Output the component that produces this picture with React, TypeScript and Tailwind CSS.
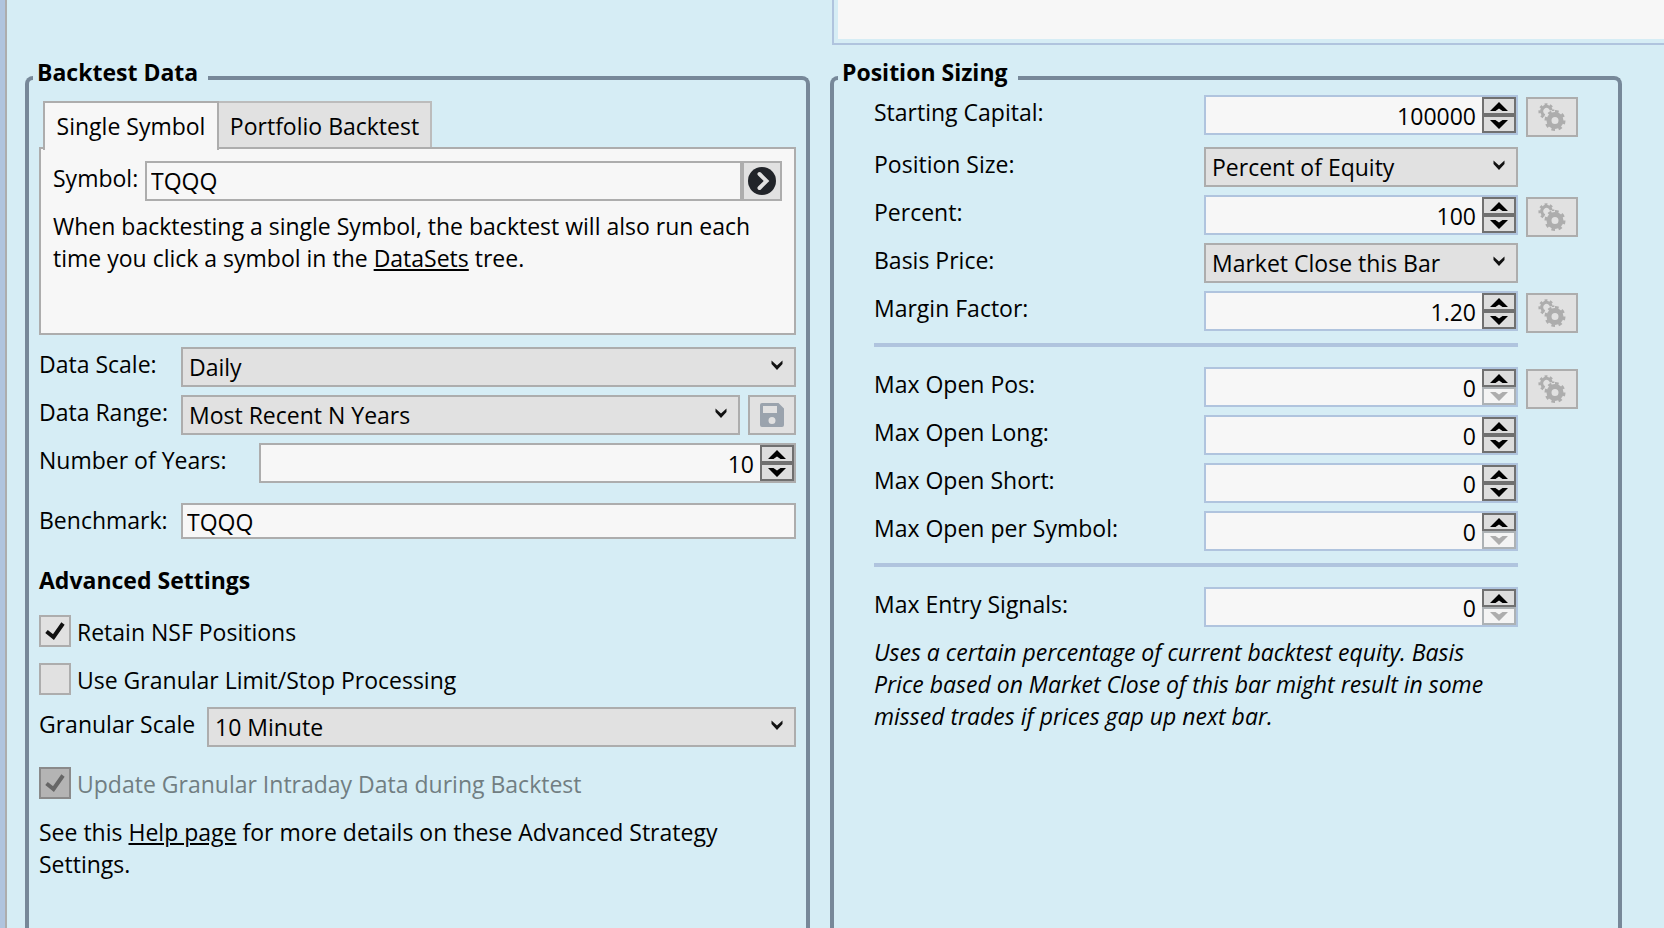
import { useId, useState } from 'react';
import type { ReactNode } from 'react';
import clsx from 'clsx';

const NOTE =
  'Uses a certain percentage of current backtest equity. Basis Price based on Market Close of this bar might result in some missed trades if prices gap up next bar.';

/* ── Icons ──────────────────────────────────────────────────────────────── */

function ChevronIcon() {
  return (
    <svg
      viewBox="0 0 12 10"
      className="pointer-events-none absolute right-[13px] top-[13px] h-2.5 w-3"
      aria-hidden
    >
      <path d="M0.5 0.5 L6 5.5 L11.5 0.5 V4 L6 10 L0.5 4 Z" fill="#111" />
    </svg>
  );
}

function SpinArrow({ down = false }: { down?: boolean }) {
  return (
    <svg viewBox="0 0 18 9" className={clsx('h-[9px] w-[18px]', down && 'rotate-180')} aria-hidden>
      <path d="M9 0 L18 9 H12.5 L9 6.5 L5.5 9 H0 Z" fill="currentColor" />
    </svg>
  );
}

function CheckIcon() {
  return (
    <svg
      viewBox="0 0 20 18"
      className="pointer-events-none absolute left-1.5 top-[7px] hidden h-[18px] w-5 peer-checked:block"
      aria-hidden
    >
      <path d="M1.5 9.5 L8.5 15 L18 1.5" fill="none" stroke="currentColor" strokeWidth="4" />
    </svg>
  );
}

function SaveIcon() {
  return (
    <svg viewBox="0 0 24 24" className="h-6 w-6" aria-hidden>
      <path
        fillRule="evenodd"
        fill="#9aa3ad"
        d="M2 0 H18.5 L24 5.5 V22 Q24 24 22 24 H2 Q0 24 0 22 V2 Q0 0 2 0 Z M3 3 V10 H17 V3 Z M12 14 A3.5 3.5 0 1 0 12 21 A3.5 3.5 0 1 0 12 14 Z"
      />
    </svg>
  );
}

function GoIcon() {
  return (
    <svg viewBox="0 0 28 28" className="h-7 w-7" aria-hidden>
      <circle cx="14" cy="14" r="14" fill="#212429" />
      <path
        d="M11.5 7 L18.5 14 L11.5 21"
        fill="none"
        stroke="#e1e1e1"
        strokeWidth="4"
        strokeLinecap="round"
      />
    </svg>
  );
}

function GearsIcon() {
  return (
    <svg viewBox="0 0 28 28" className="h-7 w-7" fill="none" stroke="#adadad" aria-hidden>
      {/* back gear, open on the side that the front one covers */}
      <path d="M6.6 12.6 A4.8 4.8 0 1 1 13.2 7.2" strokeWidth="3" />
      <path
        d="M5.2 14.2 A6.8 6.8 0 1 1 15.2 8"
        strokeWidth="2.4"
        strokeDasharray="2.7 2.6"
      />
      <circle cx="17" cy="17.5" r="6" strokeWidth="5" />
      <circle
        cx="17"
        cy="17.5"
        r="9.2"
        strokeWidth="2.6"
        strokeDasharray="3.6 3.6"
        pathLength="57.6"
      />
    </svg>
  );
}

/* ── Controls ───────────────────────────────────────────────────────────── */

function Select({ id, value }: { id: string; value: string }) {
  return (
    <div className="relative min-w-0 flex-1">
      <select
        id={id}
        defaultValue={value}
        className="block h-10 w-full appearance-none border-2 border-[#adadad] bg-[#e1e1e1] pb-px pl-1.5 pr-8"
      >
        <option value={value}>{value}</option>
      </select>
      <ChevronIcon />
    </div>
  );
}

interface SpinnerProps {
  id: string;
  value: string;
  atMin?: boolean;
  gray?: boolean;
}

function Spinner({ id, value, atMin = false, gray = false }: SpinnerProps) {
  const [text, setText] = useState(value);
  const decimals = value.includes('.') ? 2 : 0;
  const step = (by: number) => setText((Number(text) + by).toFixed(decimals));

  return (
    <div
      className={clsx(
        'flex h-10 min-w-0 flex-1 border-2 bg-[#f7f7f7]',
        gray ? 'border-[#adadad]' : 'border-[#b0c4de]',
      )}
    >
      <input
        id={id}
        type="text"
        inputMode="decimal"
        value={text}
        onChange={(e) => setText(e.target.value)}
        className="min-w-0 flex-1 pr-1.5 pt-0.5 text-right leading-8 outline-none"
      />
      <div className="flex w-[34px] flex-col">
        <button
          type="button"
          aria-label="Increase"
          onClick={() => step(1)}
          className="flex h-[18px] items-center justify-center border-2 border-[#707070] bg-[#dddddd]"
        >
          <SpinArrow />
        </button>
        <button
          type="button"
          aria-label="Decrease"
          disabled={atMin}
          onClick={() => step(-1)}
          className="flex h-[18px] items-center justify-center border-2 border-[#707070] bg-[#dddddd] disabled:border-[#adb2b5] disabled:bg-[#f4f4f4] disabled:text-[#adadad]"
        >
          <SpinArrow down />
        </button>
      </div>
    </div>
  );
}

interface CheckProps {
  label: string;
  checked?: boolean;
  disabled?: boolean;
}

function Check({ label, checked = false, disabled = false }: CheckProps) {
  return (
    <label
      className={clsx('flex h-8 items-start gap-1.5', disabled ? 'text-[#717e82]' : 'text-black')}
    >
      <span className={clsx('relative h-8 w-8 shrink-0', disabled ? 'text-[#666]' : 'text-[#111]')}>
        <input
          type="checkbox"
          defaultChecked={checked}
          disabled={disabled}
          className="peer block h-8 w-8 appearance-none border-2 border-[#adadad] bg-[#e1e1e1] disabled:border-[#8a8a8a] disabled:bg-[#b4b4b4]"
        />
        <CheckIcon />
      </span>
      <span className="pt-px">{label}</span>
    </label>
  );
}

function Group({ title, children }: { title: string; children: ReactNode }) {
  return (
    <fieldset className="min-w-0 rounded-t-lg border-4 border-b-0 border-[#778899] px-1">
      <legend className="pb-3 pl-1 pr-2.5 font-bold leading-5">{title}</legend>
      {children}
    </fieldset>
  );
}

/* ── Backtest Data ──────────────────────────────────────────────────────── */

function SymbolTabs() {
  const [tab, setTab] = useState('single');
  const tabClass = (name: string) =>
    clsx(
      'border-2 border-b-0',
      tab === name
        ? 'relative -mb-[3px] h-[49px] border-[#adadad] bg-[#f7f7f7] pb-px'
        : 'h-[46px] border-[#bcbcbc] bg-[#e1e1e1] pt-0.5',
    );

  return (
    <div>
      <div className="flex items-start px-1" role="tablist">
        <button
          type="button"
          role="tab"
          aria-selected={tab === 'single'}
          onClick={() => setTab('single')}
          className={clsx(tabClass('single'), 'w-44')}
        >
          Single Symbol
        </button>
        <button
          type="button"
          role="tab"
          aria-selected={tab === 'portfolio'}
          onClick={() => setTab('portfolio')}
          className={clsx(tabClass('portfolio'), 'w-[213px] border-l-0')}
        >
          Portfolio Backtest
        </button>
      </div>
      <div className="min-h-[188px] border-2 border-[#adadad] bg-[#f7f7f7] p-3">
        <div className="flex items-start">
          <label htmlFor="symbol" className="w-[92px] shrink-0 pt-px">
            Symbol:
          </label>
          <input
            id="symbol"
            type="text"
            defaultValue="TQQQ"
            className="h-10 min-w-0 flex-1 border-2 border-[#adadad] bg-[#f7f7f7] px-1 leading-8"
          />
          <button
            type="button"
            aria-label="Go"
            className="flex h-10 w-10 items-center justify-center border-2 border-[#adadad] bg-[#e1e1e1]"
          >
            <GoIcon />
          </button>
        </div>
        <p className="pt-[9px]">
          When backtesting a single Symbol, the backtest will also run each time you click a symbol
          in the{' '}
          <a href="#datasets" className="underline">
            DataSets
          </a>{' '}
          tree.
        </p>
      </div>
    </div>
  );
}

function BacktestData() {
  return (
    <Group title="Backtest Data">
      <div className="flex flex-col gap-2 px-1.5 pb-12 pt-[7px]">
        <SymbolTabs />
        <div className="flex items-start pt-1">
          <label htmlFor="scale" className="w-[142px] shrink-0 pt-px">
            Data Scale:
          </label>
          <Select id="scale" value="Daily" />
        </div>
        <div className="flex items-start">
          <label htmlFor="range" className="w-[142px] shrink-0 pt-px">
            Data Range:
          </label>
          <Select id="range" value="Most Recent N Years" />
          <button
            type="button"
            aria-label="Save range"
            disabled
            className="ml-2 flex h-10 w-12 items-center justify-center border-2 border-[#adadad] bg-[#e1e1e1]"
          >
            <SaveIcon />
          </button>
        </div>
        <div className="flex items-start">
          <label htmlFor="years" className="w-[220px] shrink-0 pt-px">
            Number of Years:
          </label>
          <Spinner id="years" value="10" gray />
        </div>
        <div className="flex items-start pt-3">
          <label htmlFor="benchmark" className="w-[142px] shrink-0 pt-px">
            Benchmark:
          </label>
          <input
            id="benchmark"
            type="text"
            defaultValue="TQQQ"
            className="h-9 min-w-0 flex-1 border-2 border-[#adadad] bg-[#f7f7f7] px-1 pt-0.5"
          />
        </div>
        <h2 className="pt-[17px] font-bold">Advanced Settings</h2>
        <div className="flex flex-col gap-4 pt-[11px]">
          <Check label="Retain NSF Positions" checked />
          <Check label="Use Granular Limit/Stop Processing" />
        </div>
        <div className="flex items-start pt-1">
          <label htmlFor="granular" className="w-[168px] shrink-0 pt-px">
            Granular Scale
          </label>
          <Select id="granular" value="10 Minute" />
        </div>
        <div className="pt-3">
          <Check label="Update Granular Intraday Data during Backtest" checked disabled />
        </div>
        <p className="pt-[9px]">
          See this{' '}
          <a href="#help" className="underline">
            Help page
          </a>{' '}
          for more details on these Advanced Strategy Settings.
        </p>
      </div>
    </Group>
  );
}

/* ── Position Sizing ────────────────────────────────────────────────────── */

interface SizingRowProps {
  label: string;
  value: string;
  kind?: 'number' | 'select';
  gears?: boolean;
  atMin?: boolean;
}

function SizingRow({ label, value, kind = 'number', gears = false, atMin = false }: SizingRowProps) {
  const id = useId();
  return (
    <div className="flex h-10 items-start">
      <label htmlFor={id} className="w-[330px] shrink-0 pt-px">
        {label}
      </label>
      {kind === 'select' ? (
        <Select id={id} value={value} />
      ) : (
        <Spinner id={id} value={value} atMin={atMin} />
      )}
      <div className="w-[60px] pl-2 pt-0.5">
        {gears && (
          <button
            type="button"
            aria-label={`${label} options`}
            disabled
            className="flex h-10 w-[52px] items-center justify-center border-2 border-[#adadad] bg-[#e1e1e1]"
          >
            <GearsIcon />
          </button>
        )}
      </div>
    </div>
  );
}

function Divider() {
  return <hr className="mb-3 mr-[60px] mt-1 h-1 border-0 bg-[#b0c4de]" />;
}

function PositionSizing() {
  return (
    <Group title="Position Sizing">
      <div className="flex flex-col gap-2 px-9 pt-px">
        <div className="pb-1">
          <SizingRow label="Starting Capital:" value="100000" gears />
        </div>
        <SizingRow label="Position Size:" value="Percent of Equity" kind="select" />
        <SizingRow label="Percent:" value="100" gears />
        <SizingRow label="Basis Price:" value="Market Close this Bar" kind="select" />
        <SizingRow label="Margin Factor:" value="1.20" gears />
        <Divider />
        <SizingRow label="Max Open Pos:" value="0" gears atMin />
        <SizingRow label="Max Open Long:" value="0" />
        <SizingRow label="Max Open Short:" value="0" />
        <SizingRow label="Max Open per Symbol:" value="0" atMin />
        <Divider />
        <SizingRow label="Max Entry Signals:" value="0" atMin />
        <p className="mr-[60px] pt-px italic">{NOTE}</p>
      </div>
    </Group>
  );
}

export default function App() {
  return (
    <div className="flex min-h-screen bg-[#d6edf5] font-['Open_Sans','Noto_Sans',sans-serif] text-[23px] leading-8 text-black">
      <div className="w-[7px] shrink-0 border-r-2 border-[#adadad] bg-[#b0c4de]" />
      <main className="grid flex-1 grid-cols-[785fr_792fr_22px] grid-rows-[auto_1fr] gap-x-5 gap-y-[17px] pl-[18px]">
        <div className="col-span-2 col-start-2 ml-0.5 border-b-2 border-l-2 border-[#b0c4de] pb-1 pl-1">
          <div className="h-[39px] bg-[#f7f7f7]" />
        </div>
        <div className="col-start-1 grid">
          <BacktestData />
        </div>
        <div className="grid">
          <PositionSizing />
        </div>
      </main>
    </div>
  );
}
